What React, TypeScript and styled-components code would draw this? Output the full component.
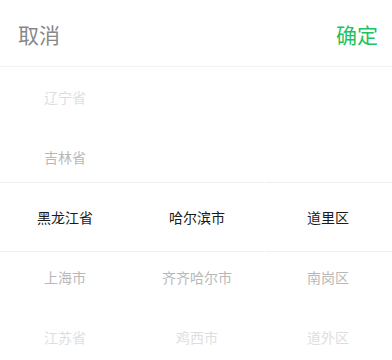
import React from "react";
import styled, { createGlobalStyle } from "styled-components";

const Global = createGlobalStyle`
  html, body { margin: 0; padding: 0; background: #fff; }
  body { font-family: "Noto Sans CJK SC", "Noto Sans", sans-serif; }
`;

const Picker = styled.div`
  width: 392px;
  height: 360px;
  background: #fff;
  overflow: hidden;
`;

const Toolbar = styled.div`
  height: 66px;
  display: flex;
  align-items: center;
  justify-content: space-between;
  padding: 0 14px 0 18px;
  border-bottom: 1px solid #f3f3f3;
  box-sizing: content-box;
`;

const ToolButton = styled.span<{ $primary?: boolean }>`
  font-size: 21px;
  line-height: 1;
  color: ${(p) => (p.$primary ? "#1fc25f" : "#888")};
  padding-top: 3px;
`;

const Columns = styled.div`
  position: relative;
  display: grid;
  grid-template-columns: 130px 134px 128px;
`;

const Column = styled.div`
  position: relative;
  display: flex;
  flex-direction: column;
`;

const Band = styled.div`
  position: absolute;
  left: 0;
  right: 0;
  top: 115px;
  height: 68px;
  border-top: 1px solid #f0f0f0;
  border-bottom: 1px solid #f0f0f0;
  pointer-events: none;
`;

const BandGap = styled.div`
  position: absolute;
  left: 264px;
  width: 1px;
  top: 115px;
  height: 70px;
  background: #fff;
  pointer-events: none;
`;

const Item = styled.div<{ $level: number }>`
  height: 60px;
  display: flex;
  align-items: center;
  justify-content: center;
  font-size: 14px;
  color: ${(p) => ["#1a1a1a", "#b8b8b8", "#dedede"][p.$level]};
`;

const data: string[][] = [
  ["辽宁省", "吉林省", "黑龙江省", "上海市", "江苏省"],
  ["", "", "哈尔滨市", "齐齐哈尔市", "鸡西市"],
  ["", "", "道里区", "南岗区", "道外区"],
];

const levels = [2, 1, 0, 1, 2];

export default function App() {
  return (
    <>
      <Global />
      <Picker>
        <Toolbar>
          <ToolButton>取消</ToolButton>
          <ToolButton $primary>确定</ToolButton>
        </Toolbar>
        <Columns>
          {data.map((col, ci) => (
            <Column key={ci}>
              {col.map((t, ri) => (
                <Item key={ri} $level={levels[ri]}>
                  {t}
                </Item>
              ))}
            </Column>
          ))}
          <Band />
          <BandGap />
        </Columns>
      </Picker>
    </>
  );
}
